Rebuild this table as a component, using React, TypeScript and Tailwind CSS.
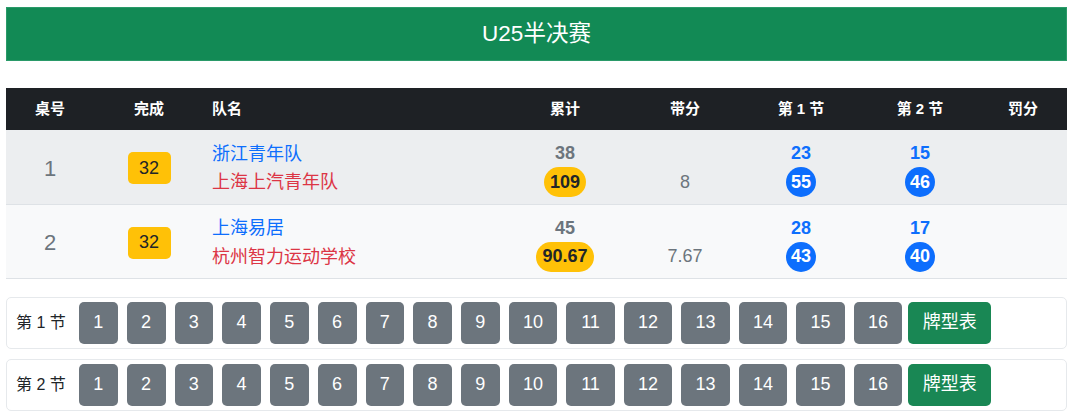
import React from "react"

type Row = {
  no: number
  done: number
  home: string
  away: string
  total: number
  sum: string
  carry: string
  q1: [number, number]
  q2: [number, number]
}

const rows: Row[] = [
  { no: 1, done: 32, home: "浙江青年队", away: "上海上汽青年队", total: 38, sum: "109", carry: "8", q1: [23, 55], q2: [15, 46] },
  { no: 2, done: 32, home: "上海易居", away: "杭州智力运动学校", total: 45, sum: "90.67", carry: "7.67", q1: [28, 43], q2: [17, 40] },
]

const boards = Array.from({ length: 16 }, (_, i) => i + 1)

const QuarterCell = ({ top, score }: { top: number; score: number }) => (
  <td className="text-center pt-[3px]">
    <div className="flex flex-col items-center">
      <div className="leading-[28px] text-[18px] font-bold text-[#0d6efd]">{top}</div>
      <div className="w-[30px] h-[30px] rounded-full bg-[#0d6efd] text-white text-[18px] font-bold flex items-center justify-center">
        {score}
      </div>
    </div>
  </td>
)

const SectionBar = ({ label }: { label: string }) => (
  <div className="flex items-center h-[52px] border border-[#e6e9ec] rounded-[5px] bg-white pl-[9px]">
    <span className="w-[63px] text-[16px] text-[#212529]">{label}</span>
    <div className="flex gap-[9px]">
      {boards.map(b => (
        <button
          key={b}
          className={`${b < 10 ? "w-[38.75px]" : "w-[48.5px]"} h-[42px] rounded-[5px] bg-[#6c757d] text-white text-[18px]`}
        >
          {b}
        </button>
      ))}
    </div>
    <button className="ml-[6px] w-[83px] h-[42px] rounded-[5px] bg-[#198754] text-white text-[18px]">
      牌型表
    </button>
  </div>
)

export default function App() {
  return (
    <div className="w-[1080px] h-[416px] bg-white overflow-hidden font-['Liberation_Sans','Noto_Sans_CJK_SC',sans-serif]">
      <div className="mx-[6px] w-[1061px] pt-[7px]">
        <div className="h-[54px] bg-[#128a55] border border-[#4fb286]/40 flex items-center justify-center text-white text-[22.5px]">
          U25半决赛
        </div>

        <table className="mt-[27px] w-full table-fixed border-collapse">
          <colgroup>
            <col className="w-[88px]" />
            <col className="w-[110px]" />
            <col className="w-[297px]" />
            <col className="w-[128px]" />
            <col className="w-[112px]" />
            <col className="w-[120px]" />
            <col className="w-[118px]" />
            <col className="w-[88px]" />
          </colgroup>
          <thead>
            <tr className="bg-[#1e2125] text-white text-[15px] font-bold h-[42px]">
              <th className="text-center font-bold">桌号</th>
              <th className="text-center font-bold">完成</th>
              <th className="text-left font-bold pl-2">队名</th>
              <th className="text-center font-bold">累计</th>
              <th className="text-center font-bold">带分</th>
              <th className="text-center font-bold">第 1 节</th>
              <th className="text-center font-bold">第 2 节</th>
              <th className="text-center font-bold">罚分</th>
            </tr>
          </thead>
          <tbody>
            {rows.map((r, i) => (
              <tr
                key={r.no}
                className={`${i === 0 ? "bg-[#eceef0]" : "bg-[#f8f9fa]"} h-[74px] border-b border-[#dee2e6]`}
              >
                <td className="text-center text-[22px] text-[#6c757d] pt-[3px]">{r.no}</td>
                <td className="pt-[3px]">
                  <div className="flex justify-center">
                    <span className="w-[43px] h-[32px] rounded-[5px] bg-[#ffc107] text-[#212529] text-[18px] flex items-center justify-center">
                      {r.done}
                    </span>
                  </div>
                </td>
                <td className="pl-2 pt-[3px] text-[18px] leading-[28.5px]">
                  <div className="text-[#0d6efd]">{r.home}</div>
                  <div className="text-[#dc3545]">{r.away}</div>
                </td>
                <td className="pt-[3px]">
                  <div className="flex flex-col items-center">
                    <div className="leading-[28px] text-[18px] font-bold text-[#6c757d]">{r.total}</div>
                    <div className="h-[30px] px-[6px] rounded-full bg-[#ffc107] text-[#212529] text-[18px] font-bold flex items-center">
                      {r.sum}
                    </div>
                  </div>
                </td>
                <td className="pt-[3px]">
                  <div className="flex flex-col items-center">
                    <div className="h-[28px]" />
                    <div className="h-[30px] text-[18px] text-[#6c757d] flex items-center">{r.carry}</div>
                  </div>
                </td>
                <QuarterCell top={r.q1[0]} score={r.q1[1]} />
                <QuarterCell top={r.q2[0]} score={r.q2[1]} />
                <td />
              </tr>
            ))}
          </tbody>
        </table>

        <div className="mt-[18px] flex flex-col gap-[10px]">
          <SectionBar label="第 1 节" />
          <SectionBar label="第 2 节" />
        </div>
      </div>
    </div>
  )
}
